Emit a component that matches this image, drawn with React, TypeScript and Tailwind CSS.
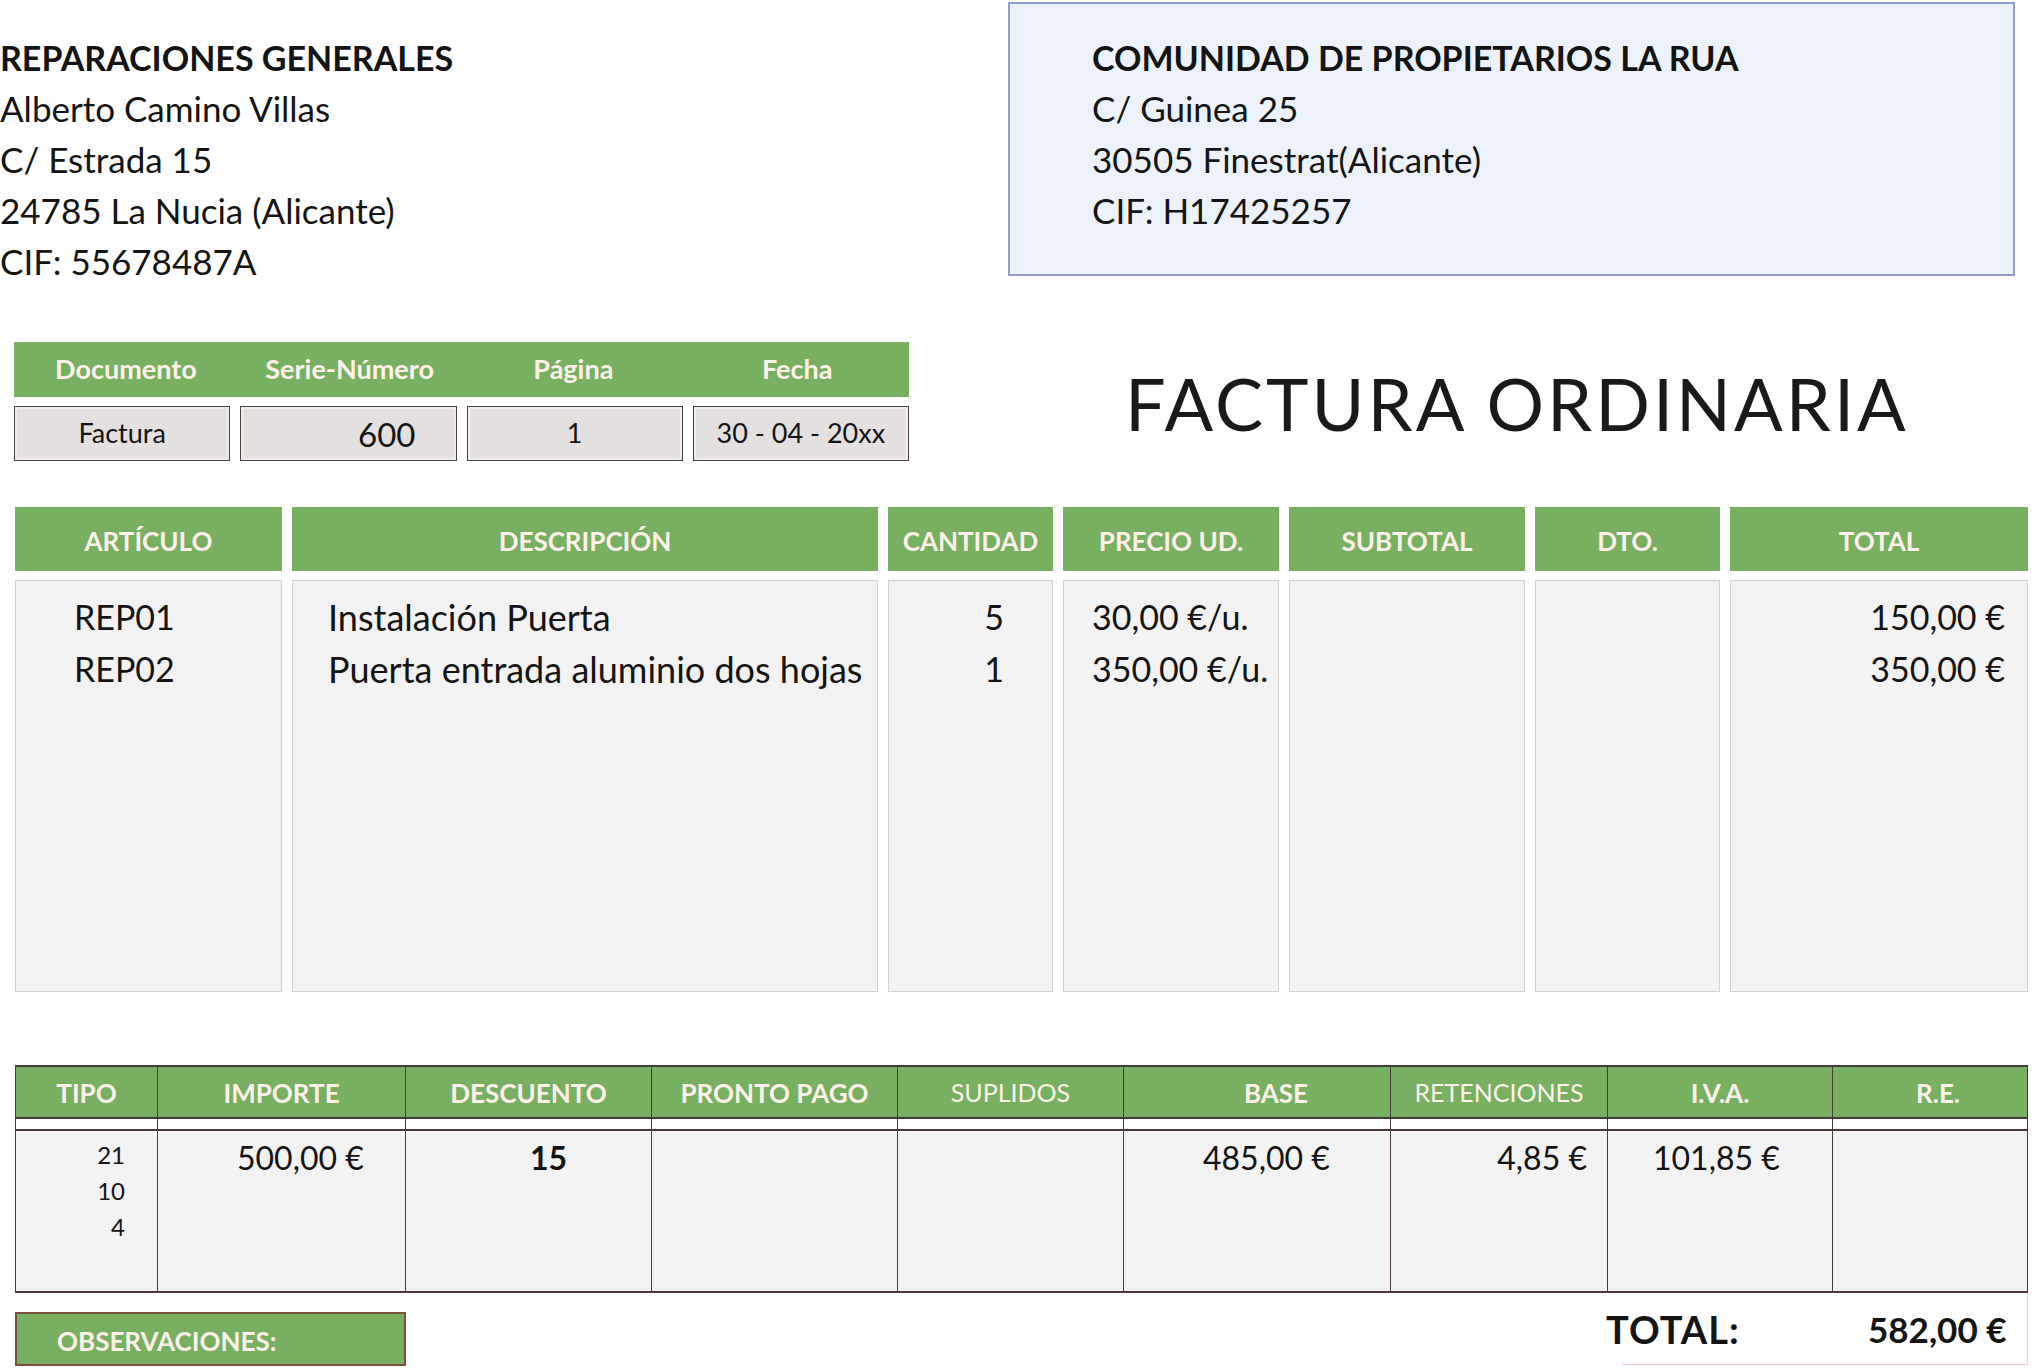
const ink = 'text-[#141414]';

const itemCols = [
  { label: 'ARTÍCULO', w: 'w-[267px]' },
  { label: 'DESCRIPCIÓN', w: 'w-[586px]' },
  { label: 'CANTIDAD', w: 'w-[165px]' },
  { label: 'PRECIO UD.', w: 'w-[216px]' },
  { label: 'SUBTOTAL', w: 'w-[236px]' },
  { label: 'DTO.', w: 'w-[185px]' },
  { label: 'TOTAL', w: 'w-[298px]' },
];

const items = [
  { code: 'REP01', desc: 'Instalación Puerta', qty: '5', price: '30,00 €/u.', total: '150,00 €' },
  { code: 'REP02', desc: 'Puerta entrada aluminio dos hojas', qty: '1', price: '350,00 €/u.', total: '350,00 €' },
];

function DocTable() {
  const heads = ['Documento', 'Serie-Número', 'Página', 'Fecha'];
  const box =
    'h-[55px] bg-[#e3e0df] border-[1.5px] border-[#4b413e] shadow-[inset_0_0_0_2px_#eeeceb] flex items-center justify-center text-[27px] ' +
    ink;
  return (
    <div className="w-[895px] ml-[14px]">
      <div className="h-[55px] bg-[#76b060] grid grid-cols-4 items-center">
        {heads.map((h) => (
          <div key={h} className="text-center text-[27px] font-bold text-[#fdf1ea]">
            {h}
          </div>
        ))}
      </div>
      <div className="grid grid-cols-4 gap-[10px] mt-[9px]">
        <div className={box}>Factura</div>
        <div className={box + ' !justify-end !items-end pr-[40px] pb-[1px] !text-[33px]'}>600</div>
        <div className={box}>1</div>
        <div className={box}>30 - 04 - 20xx</div>
      </div>
    </div>
  );
}

function ItemsTable() {
  return (
    <div className="flex gap-[10px] ml-[15px] mt-[46px]">
      {itemCols.map((c, i) => (
        <div key={c.label} className={c.w + ' flex flex-col gap-[9px]'}>
          <div className="h-[64px] bg-[#76b060] flex items-center justify-center pt-[4px] text-[26px] font-bold text-[#fdf1ea]">
            {c.label}
          </div>
          <div className="h-[412px] bg-[#f3f2f2] border border-[#d3d0d0] pt-[10px] text-[34px] leading-[52px] text-[#141414]">
            {items.map((it) => (
              <div key={it.code}>
                {i === 0 && <div className="pl-[58px]">{it.code}</div>}
                {i === 1 && <div className="pl-[35px] whitespace-nowrap text-[36px]">{it.desc}</div>}
                {i === 2 && <div className="text-right pr-[48px]">{it.qty}</div>}
                {i === 3 && <div className="pl-[28px] whitespace-nowrap">{it.price}</div>}
                {i === 6 && <div className="text-right pr-[22px]">{it.total}</div>}
              </div>
            ))}
          </div>
        </div>
      ))}
    </div>
  );
}

const sumCols = [
  { label: 'TIPO', w: 'w-[143px]', bold: true },
  { label: 'IMPORTE', w: 'w-[248px]', bold: true },
  { label: 'DESCUENTO', w: 'w-[246px]', bold: true },
  { label: 'PRONTO PAGO', w: 'w-[246px]', bold: true },
  { label: 'SUPLIDOS', w: 'w-[226px]', bold: false },
  { label: 'BASE', w: 'w-[267px]', bold: true },
  { label: 'RETENCIONES', w: 'w-[217px]', bold: false },
  { label: 'I.V.A.', w: 'w-[225px]', bold: true },
  { label: 'R.E.', w: 'w-[195px]', bold: true },
];

function SumBody({ i }: { i: number }) {
  const v = 'text-[32px] leading-[40px] pt-[7px] ' + ink;
  if (i === 0)
    return (
      <div className="text-right pr-[32px] pt-[6px] text-[24px] leading-[36px] text-[#141414]">
        <div>21</div>
        <div>10</div>
        <div>4</div>
      </div>
    );
  if (i === 1) return <div className={v + ' pl-[79px]'}>500,00 €</div>;
  if (i === 2) return <div className={v + ' pl-[124px] font-bold'}>15</div>;
  if (i === 5) return <div className={v + ' pl-[79px]'}>485,00 €</div>;
  if (i === 6) return <div className={v + ' text-right pr-[20px]'}>4,85 €</div>;
  if (i === 7) return <div className={v + ' pl-[45px]'}>101,85 €</div>;
  return null;
}

function SummaryTable() {
  return (
    <div className="flex ml-[15px] mt-[73px]">
      {sumCols.map((c, i) => (
        <div
          key={c.label}
          className={
            c.w +
            ' flex flex-col border-r border-[#4a3a37]' +
            (i === 0 ? ' border-l' : '')
          }
        >
          <div
            className={
              'h-[54px] bg-[#76b060] border-y-2 border-[#4a3a37] flex items-center justify-center pt-[2px] text-[#fdf1ea] ' +
              (c.bold ? 'font-bold text-[26px]' : 'font-normal text-[25px]') +
              (c.label === 'BASE' ? ' pl-[38px]' : '') +
              (c.label === 'R.E.' ? ' pl-[16px]' : '')
            }
          >
            {c.label}
          </div>
          <div className="h-[10px]" />
          <div className="h-[164px] bg-[#f3f2f2] border-y-2 border-[#4a3a37]">
            <SumBody i={i} />
          </div>
        </div>
      ))}
    </div>
  );
}

export default function App() {
  return (
    <div className="w-[2041px] h-[1372px] bg-white overflow-hidden font-['Lato','Open_Sans',sans-serif]">
      {/* sender / customer */}
      <div className="flex items-start h-[276px]">
        <div className="w-[1008px] pt-[32px] text-[35px] leading-[51px] text-[#141414] whitespace-nowrap">
          <div className="font-bold text-[34px]">REPARACIONES GENERALES</div>
          <div>Alberto Camino Villas</div>
          <div>C/ Estrada 15</div>
          <div>24785 La Nucia (Alicante)</div>
          <div>CIF: 55678487A</div>
        </div>
        <div className="w-[1007px] h-[274px] mt-[2px] bg-[#edf2fa] border-2 border-[#8f9ccc] pl-[82px] pt-[28px] text-[35px] leading-[51px] text-[#141414] whitespace-nowrap">
          <div className="font-bold text-[34px]">COMUNIDAD DE PROPIETARIOS LA RUA</div>
          <div>C/ Guinea 25</div>
          <div>30505 Finestrat(Alicante)</div>
          <div>CIF: H17425257</div>
        </div>
      </div>

      {/* document info + title */}
      <div className="flex items-start mt-[66px]">
        <DocTable />
        <div className="ml-[216px] mt-[17px] text-[72px] leading-[88px] tracking-[3px] text-[#1a1a1a] whitespace-nowrap">
          FACTURA ORDINARIA
        </div>
      </div>

      <ItemsTable />
      <SummaryTable />

      {/* observations + total */}
      <div className="flex items-start mt-[19px]">
        <div className="ml-[15px] w-[391px] h-[54px] bg-[#76b060] border-2 border-[#7a4f3e] flex items-center pl-[40px] pt-[4px] text-[26px] font-bold text-[#fdf1ea] whitespace-nowrap">
          OBSERVACIONES:
        </div>
        <div className="ml-[1216px] -mt-[18px] w-[406px] h-[71px] border-r border-b border-[#f6cdd1] flex items-center font-bold text-[#141414] whitespace-nowrap">
          <div className="w-[262px] -ml-[16px] text-[38px] tracking-[1px]">TOTAL:</div>
          <div className="text-[35px]">582,00 €</div>
        </div>
      </div>
    </div>
  );
}
